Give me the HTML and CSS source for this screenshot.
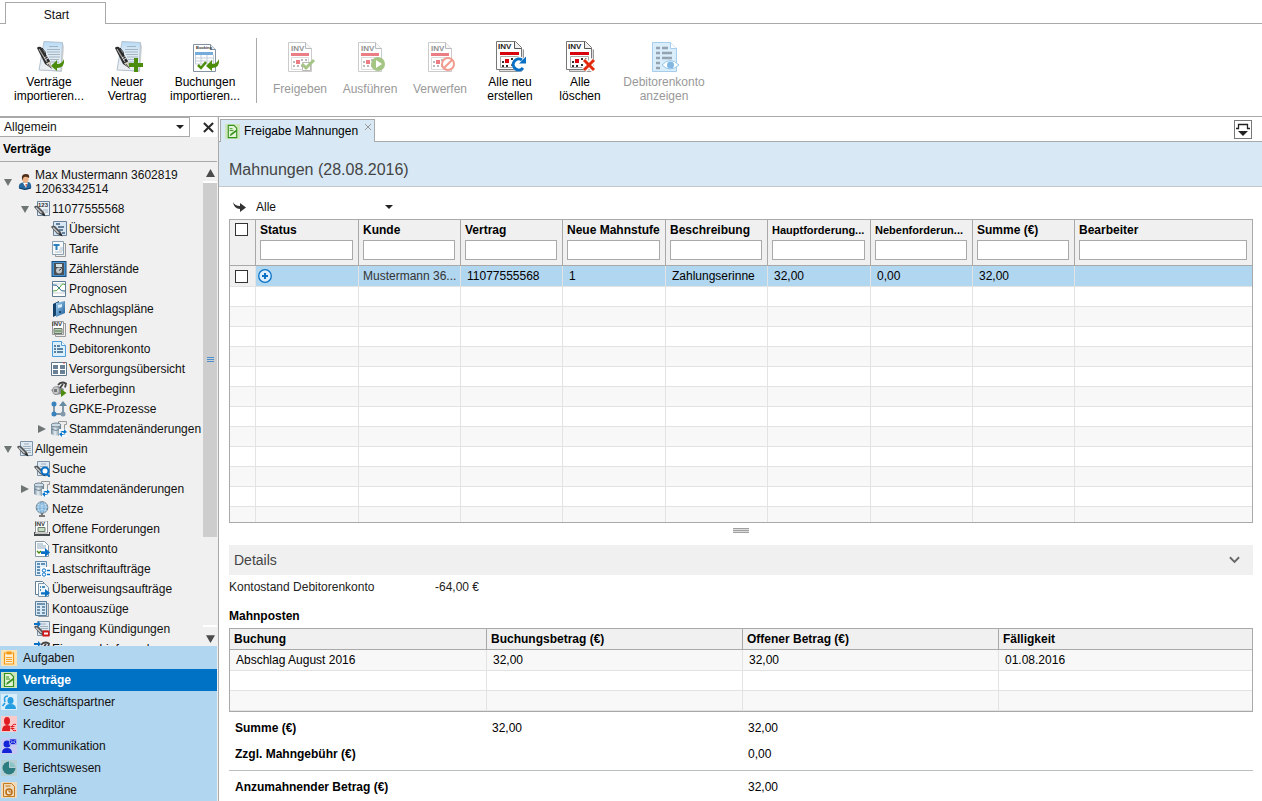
FILE: index.html
```html
<!DOCTYPE html>
<html lang="de">
<head>
<meta charset="utf-8">
<title>Freigabe Mahnungen</title>
<link rel="stylesheet" href="styles.css">
</head>
<body>
<svg class="sprite" aria-hidden="true">
  <defs>
    <linearGradient id="paper" x1="0" y1="0" x2="0" y2="1"><stop offset="0" stop-color="#b5daf6"/><stop offset=".35" stop-color="#dde9f3"/><stop offset="1" stop-color="#eef0f2"/></linearGradient>
    <linearGradient id="steel" x1="0" y1="0" x2="1" y2="0"><stop offset="0" stop-color="#6f8798"/><stop offset=".4" stop-color="#e6eef4"/><stop offset="1" stop-color="#5f7788"/></linearGradient>
    <linearGradient id="blue" x1="0" y1="0" x2="1" y2="1"><stop offset="0" stop-color="#a4d2f3"/><stop offset="1" stop-color="#1b5c96"/></linearGradient>
  </defs>
  <symbol id="contract" viewBox="0 0 32 32">
    <path d="M7 30 29 32 31 7 30 3z" fill="#d5d5d5"/>
    <path d="M11 1.500 29.500 2.500 28 31 6 30z" fill="url(#paper)" stroke="#b3c3d0"/>
    <path d="M16 6.500h9M14 9.500h13M14 12h13M15 14.500h12M16 17h11M17 19.500h9M18 22h8M19 24.500h6" stroke="#93a7b8" stroke-width=".8"/>
    <path d="M4 8Q5 6 8 7L17 21 18 28 12 24z" fill="#2b2b2d"/>
    <path d="M6 9 14 22" stroke="#a8a8a8" stroke-width="1.200"/>
    <path d="M11 18l3-2M12 20l3-2" stroke="#e4e4e4"/>
    <path d="M13 23.500 18.500 28.500 17 21.500z" fill="#d8d2c2"/><path d="M15 24 18.500 28.500" stroke="#333" stroke-width=".8"/>
    <path d="M9 8Q13 11 13 17" stroke="#222" fill="none"/>
  </symbol>
  <symbol id="garrow" viewBox="0 0 14 12"><path d="M0 7 6 1V5Q11 5 13 0 14 9 6 9V12z" fill="#4c8c0b"/></symbol>
  <symbol id="invpage" viewBox="0 0 32 32">
    <path d="M4.500 2.500h17l6 6v23h-23z" fill="#fff" stroke="#999"/>
    <path d="M21.500 2.500v6h6" fill="#eee" stroke="#777"/>
    <text x="7" y="11" class="inv">INV</text>
    <path d="M7 13h18v3H7z" fill="#d9000d"/>
    <path d="M7.500 17.500h17v12h-17z" fill="#fff" stroke="#bbb"/>
    <path d="M12 20h4v4h-4z" fill="#d9000d"/>
    <path d="M9 22h2M17 20h2M21 20h2M9 26h2M13 26h2M17 26h2M21 24h2" stroke="#777" stroke-width="2"/>
  </symbol>
  <symbol id="invstack" viewBox="0 0 32 32">
    <path d="M3.500 3.500v26h2v2h22l2-2v-20" fill="#ddd" stroke="#999"/>
    <path d="M2.500 1.500h19l6 6v22h-25z" fill="#fff" stroke="#777"/>
    <path d="M20.500 1.500v7h7" fill="#eee" stroke="#555"/>
    <text x="4" y="9" class="inv">INV</text>
    <path d="M6 12h19v3H6z" fill="#d9000d"/>
    <path d="M6.500 16.500h18v11h-18z" fill="#fff" stroke="#aaa"/>
    <path d="M11 19h4v4h-4z" fill="#d9000d"/>
    <path d="M8 22h2M17 19h2M21 19h2M8 26h2M12 26h2M17 25h2" stroke="#333" stroke-width="2"/>
  </symbol>
  <symbol id="pen" viewBox="0 0 16 16">
    <path d="M0 6Q1 4 4 5L10 11 11 15 6 13z" fill="#55595c"/><path d="M2 6.500 7.500 12" stroke="#c8cacb" stroke-width="1.200"/><path d="M8 13.500 10 12 11.500 15.500z" fill="#222"/>
  </symbol>
  <symbol id="s-contract" viewBox="0 0 16 16">
    <path d="M3.500.5h12v14h-12z" fill="#dfe9f1" stroke="#7c93a8"/>
    <path d="M7 3h5M6 5.500h8M7 7.500h7M9 9.500h5M11 11.500h3" stroke="#8d9fb0" stroke-width=".8"/>
    <use href="#pen" width="16" height="16"/>
  </symbol>
  <symbol id="s-person" viewBox="0 0 16 16">
    <path d="M2 14Q1 9 6 8.500L12 8Q15 10 14 14 8 17 2 14z" fill="#24689f"/><path d="M6 9 9 14 11 8.500z" fill="#fff"/><path d="M8.500 10 9 14 10 10z" fill="#c0392b"/><path d="M2 14Q8 17 14 14" stroke="#0b3868" fill="none"/>
    <ellipse cx="8.500" cy="5" rx="3" ry="4" fill="#ecb488"/><path d="M5 5Q4 0 9 0q4 0 3 4-3-2-5-1-1 1-2 4z" fill="#51301b"/>
  </symbol>
  <symbol id="s-number" viewBox="0 0 16 16">
    <path d="M3.500.5h12v14h-12z" fill="#e8eff5" stroke="#6a8299"/><text x="4" y="6" class="tiny">123</text>
    <path d="M9 9h5M11 11h3" stroke="#a3b3c0"/>
    <use href="#pen" width="16" height="16"/>
  </symbol>
  <symbol id="s-overview" viewBox="0 0 16 16">
    <path d="M2.500.5h13v14h-13z" fill="#d7e6f2" stroke="#6a8299"/><path d="M5 3h4M7 6h6M8 9h4M11 12h3" stroke="#66809a" stroke-width="1.800"/>
    <use href="#pen" width="16" height="16"/>
  </symbol>
  <symbol id="s-tariff" viewBox="0 0 16 16">
    <path d="M4.500 2.500h10v13h-10z" fill="#eee" stroke="#999"/><path d="M1.500.5h11v13h-11z" fill="#f7fafc" stroke="#8ba0b0"/>
    <path d="M2.500 4h6M5.500 4v5" stroke="#2c80bd" stroke-width="2"/><path d="M9 7h3M8 9h4M4 11h7" stroke="#b0bcc6"/>
  </symbol>
  <symbol id="s-meter" viewBox="0 0 16 16">
    <rect x="1" y=".5" width="14" height="15" fill="#4c93d0" stroke="#174c7c"/><path d="M3 2h10v12H3z" fill="#4a4f54"/><path d="M5 3h6v3H5z" fill="#d7e1e8"/><circle cx="8" cy="9.500" r="3" fill="#c3c8cc"/><path d="M8 9.500 10 8" stroke="#333"/>
  </symbol>
  <symbol id="s-forecast" viewBox="0 0 16 16">
    <path d="M1.500.5h13v15h-13z" fill="#fff" stroke="#5d7d95"/><path d="M2 12h12M2 3h12" stroke="#c2cdd5"/><path d="M2 4Q6 3 8 7t6 3" stroke="#23608d" fill="none"/><path d="M2 10Q6 11 9 6t5-2" stroke="#50a73c" fill="none"/>
  </symbol>
  <symbol id="s-folder" viewBox="0 0 16 16">
    <path d="M2 3 8 0v13l-6 3z" fill="#15426a"/><path d="M5 2 14 0v12l-9 4z" fill="url(#blue)"/><path d="M7 4 11 3v3L7 7z" fill="#d7eafa"/><circle cx="9" cy="11" r="1" fill="#09355e"/>
  </symbol>
  <symbol id="s-invoice" viewBox="0 0 16 16">
    <path d="M4.500 2.500h10v13h-10z" fill="#eee" stroke="#999"/><path d="M1.500.5h11v13h-11z" fill="#fff" stroke="#999"/><text x="1" y="5" class="tiny">INV</text>
    <path d="M3 7.500h8v5H3z" fill="#b9d1b4" stroke="#68756a"/><path d="M4 10h6" stroke="#557052"/>
  </symbol>
  <symbol id="s-account" viewBox="0 0 16 16">
    <path d="M1.500.5h9l4 4v11h-13z" fill="#dceffc" stroke="#4c9edb"/><path d="M10.500.5v4h4" fill="#fff" stroke="#4c9edb"/><path d="M3 5h2M3 8h2M3 11h2M6 5h3M6 8h6M6 11h6" stroke="#315e83" stroke-width="1.500"/>
  </symbol>
  <symbol id="s-grid" viewBox="0 0 16 16">
    <path d="M.5 1.500h15v13H.5z" fill="#fff" stroke="#60788c"/><path d="M2 4h5v4H2zM9 4h5v4H9zM2 9h5v4H2zM9 9h5v4H9z" fill="#6b8296"/><path d="M12 2h2" stroke="#d44"/>
  </symbol>
  <symbol id="s-plug" viewBox="0 0 16 16">
    <path d="M0 9 7 5l6 3-2 5-7 1z" fill="#85898b"/><ellipse cx="5" cy="9.500" rx="3.500" ry="4" fill="#c5c8ca" stroke="#777" stroke-width=".6"/><path d="M7 4Q10 0 15 2.500l-1 4M9 7l3-4" stroke="#444" stroke-width="1.800" fill="none"/><path d="M10 8 15.500 12 10 16z" fill="#4c8c0b"/><path d="M3 8h3v3H3z" fill="#777"/>
  </symbol>
  <symbol id="s-process" viewBox="0 0 16 16">
    <path d="M3 3v10h9V4" stroke="#829aac" stroke-width="2" fill="none"/><path d="M8 5 12 0 16 5z" fill="#688aa3"/><circle cx="3" cy="3" r="2.500" fill="#3882bd"/><circle cx="3" cy="13" r="2.500" fill="#3882bd"/><circle cx="12" cy="13" r="2.500" fill="#829aac"/>
  </symbol>
  <symbol id="s-data" viewBox="0 0 16 16">
    <path d="M7.500.5h8v3h-2v11h-6z" fill="#eee" stroke="#999"/><path d="M0 4v9q5 3 10 0V4z" fill="url(#steel)"/><ellipse cx="5" cy="4" rx="5" ry="2" fill="#cddbe5" stroke="#708594"/><path d="M0 8q5 3 10 0" stroke="#708594" fill="none"/>
    <path d="M8 8h8v8H8z" fill="#f4f8fb"/><path d="M9 10h4V8l3 3-3 2v-1M15 14h-4v2l-3-3 3-2v2" fill="#0b77cb"/>
  </symbol>
  <symbol id="s-search" viewBox="0 0 16 16">
    <use href="#s-contract" width="16" height="16"/><circle cx="11" cy="10" r="3.500" fill="#fff" stroke="#0871c5" stroke-width="2"/><path d="M13 13 16 16" stroke="#0871c5" stroke-width="2"/>
  </symbol>
  <symbol id="s-globe" viewBox="0 0 16 16">
    <path d="M8 12v3M5 15h6" stroke="#777" stroke-width="2"/><circle cx="8" cy="6.500" r="5.800" fill="#7cb1da" stroke="#667987"/><path d="M2 6h12M8 1v11M3 3q5 3 10 0M3 10q5-3 10 0M6 1Q2 6 6 12M10 1q4 5 0 11" stroke="#e5f2fb" stroke-width=".5" fill="none"/>
  </symbol>
  <symbol id="s-open" viewBox="0 0 16 16">
    <path d="M1.500 0v12h12V0z" fill="#fff" stroke="#999"/><text x="1" y="5" class="tiny">INV</text><path d="M4 6.500h7v4H4z" fill="#c7dec2" stroke="#6c7a6d"/><path d="M0 11h1v2h14v-2h1v4H0z" fill="#464b4e"/>
  </symbol>
  <symbol id="s-transit" viewBox="0 0 16 16">
    <path d="M1.500.5h9l4 4v11h-13z" fill="#fff" stroke="#8598a7"/><path d="M3 3h6M3 5h9M3 7h9" stroke="#8da9be"/><path d="M3 10 5 12 7 10" stroke="#4c8c0b" stroke-width="1.500" fill="none"/><path d="M7 10.300h4V7l5 4.500-5 4.500v-3H7z" fill="#0871c5"/>
  </symbol>
  <symbol id="s-debit" viewBox="0 0 16 16">
    <path d="M1.500.5h11v14h-11z" fill="#e4f0f9" stroke="#5d8bb0"/><path d="M3 3h3M7 3h4M3 6h3M3 9h3M3 12h3" stroke="#35709f" stroke-width="1.500"/><path d="M7 6h9v10H7z" fill="#fff"/><circle cx="10" cy="9.500" r="1.700" fill="none" stroke="#0871c5"/><circle cx="10" cy="13.500" r="1.700" fill="none" stroke="#0871c5"/><path d="M13 9.500h3M13 13.500h3" stroke="#0871c5" stroke-width="1.500"/>
  </symbol>
  <symbol id="s-transfer" viewBox="0 0 16 16">
    <path d="M1.500.5h7l2 2v11h-9z" fill="#fff" stroke="#5f7d95"/><path d="M4.500 2.500h6l4 4v9h-10z" fill="#eff6fb" stroke="#7c96ab"/><path d="M6 6h1M6 9h1M8 6h3" stroke="#16699f" stroke-width="1.500"/><path d="M7 11.300h4V8l5 4-5 4v-2.500H7z" fill="#0871c5"/>
  </symbol>
  <symbol id="s-statement" viewBox="0 0 16 16">
    <path d="M4.500 2.500h10v13h-10z" fill="#ddd" stroke="#8999a5"/><path d="M1.500.5h11v14h-11z" fill="#d8eaf7" stroke="#5c7d98"/><path d="M3 3h8M3 6h3M8 6h3M3 9h3M8 9h3M3 12h3M8 12h3" stroke="#527794" stroke-width="1.500"/>
  </symbol>
  <symbol id="s-cancel" viewBox="0 0 16 16">
    <use href="#s-contract" width="16" height="16"/><path d="M0 2h4V0l3 3-3 3V4H0z" fill="#0871c5"/><path d="M8.500 9.500h7v6h-7z" fill="#d41818"/><path d="M10 12.500h4" stroke="#fff" stroke-width="2"/>
  </symbol>
  <symbol id="s-supply" viewBox="0 0 16 16">
    <use href="#s-plug" width="16" height="16"/><path d="M0 2h4V0l3 3-3 3V4H0z" fill="#0871c5"/>
  </symbol>
  <symbol id="n-tasks" viewBox="0 0 16 16">
    <path d="M0 0h16v16H0z" fill="#fbe3b3"/><path d="M3.500 3h9v11h-9z" fill="#fdf0d6" stroke="#f39a12" stroke-width="1.200"/><path d="M5.500 1.500h5v3h-5z" fill="#f39a12"/><path d="M5 7.500h6M5 9.500h6M5 11.500h6" stroke="#f39a12" stroke-width=".9"/>
  </symbol>
  <symbol id="n-contract" viewBox="0 0 16 16">
    <path d="M0 0h16v16H0z" fill="#cde6bd"/><path d="M3.500 1.500h6l3 3v10h-9z" fill="#e4f4d8" stroke="#36921d" stroke-width="1.200"/><path d="M5 5h3M5 7h4" stroke="#36921d"/><path d="M5 13 6 10.500 12 6 13 7.500 7 12z" fill="#36921d"/>
  </symbol>
  <symbol id="n-partner" viewBox="0 0 16 16">
    <path d="M0 0h16v16H0z" fill="#d9eefb"/><path d="M4 8Q2 2 7 2M1.500 12l2.500-3" fill="none" stroke="#249de1" stroke-width="1.600"/><ellipse cx="9.500" cy="6.500" rx="3" ry="3.500" fill="#249de1"/><path d="M4 15q0-5 5.500-5t5.500 5z" fill="#249de1"/>
  </symbol>
  <symbol id="n-creditor" viewBox="0 0 16 16">
    <path d="M0 0h16v16H0z" fill="#f8caca"/><ellipse cx="6" cy="5" rx="3" ry="4" fill="#e01c23"/><path d="M1 15q0-6 5-6t5 6z" fill="#e01c23"/><path d="M9 7h7v9H9z" fill="#f8caca"/><path d="M15 8.500q-4-1-4 3t4 3M9.500 10.500h4M9.500 12.500h4" stroke="#e01c23" fill="none"/>
  </symbol>
  <symbol id="n-comm" viewBox="0 0 16 16">
    <path d="M0 0h16v16H0z" fill="#c7cbf4"/><circle cx="6" cy="6" r="3.500" fill="#1425d8"/><path d="M1 15q0-5 5-5t5 5z" fill="#1425d8"/><path d="M8.500 1h7v5.500h-7z" fill="#1425d8" stroke="#c7cbf4" stroke-width=".6"/><path d="M9 1.500 12 4.500 15 1.500M9 6 11 4M15 6 13 4" stroke="#c7cbf4" stroke-width=".8" fill="none"/>
  </symbol>
  <symbol id="n-report" viewBox="0 0 16 16">
    <path d="M0 0h16v16H0z" fill="#b5d0d4"/><circle cx="8" cy="8" r="6.500" fill="#2d7d80"/><path d="M8.500 7.500V1.500A6 6 0 0 1 14.500 7.500z" fill="#8cc3c6" stroke="#b5d0d4"/>
  </symbol>
  <symbol id="n-plan" viewBox="0 0 16 16">
    <path d="M0 0h16v16H0z" fill="#f0d9b9"/><path d="M2.500 1.500h8l3 3v10h-11z" fill="none" stroke="#c37a1d"/><path d="M4.500 4h5" stroke="#c37a1d"/><circle cx="8" cy="10" r="3" fill="#f5e6d0" stroke="#b76c12" stroke-width="1.500"/><path d="M8 8v2h2" fill="none" stroke="#b76c12"/>
  </symbol>
  <symbol id="open" viewBox="0 0 8 8"><path d="M0 1h8L4 8z" fill="#6f7474"/></symbol>
  <symbol id="closed" viewBox="0 0 8 8"><path d="M0 0v8l8-4z" fill="#6f7474"/></symbol>
  <symbol id="caret" viewBox="0 0 8 4"><path d="M0 0h8L4 4z" fill="#222"/></symbol>
</svg>

<header class="ribbon-tabs"><button class="ribbon-tab">Start</button></header>
<nav class="toolbar" aria-label="Aktionen">
  <button class="tool"><svg viewBox="0 0 32 32"><use href="#contract"/><use href="#garrow" x="18" y="19" width="14" height="12"/></svg><span>Verträge<br>importieren...</span></button>
  <button class="tool"><svg viewBox="0 0 32 32"><use href="#contract"/><path d="M23 18h4v5h5v4h-5v5h-4v-5h-5v-4h5z" fill="#4c8c0b"/></svg><span>Neuer<br>Vertrag</span></button>
  <button class="tool"><svg viewBox="0 0 32 32"><path d="M4.500 4.500h17l5 5v22h-22z" fill="#fff" stroke="#8392a0"/><path d="M21.500 4.500v5h5" fill="#eee" stroke="#8392a0"/><text x="7" y="9" class="micro">Booking</text><path d="M6 12h18v3H6z" fill="#75acdc"/><path d="M6.500 15v9h18v-9M12 15v9M18 15v9M7 18h17M7 21h17" stroke="#c2ced8" fill="none"/><path d="M9 25 12 28 17 22" stroke="#4c8c0b" stroke-width="2.500" fill="none"/><use href="#garrow" x="17" y="19" width="14" height="12"/></svg><span>Buchungen<br>importieren...</span></button>
  <span class="separator"></span>
  <button class="tool narrow" disabled><svg viewBox="0 0 32 32"><use href="#invpage"/><path d="M18.500 22.500h8v8h-8z" fill="#fff" stroke="#777"/><path d="M18 24 22 28 30 20" stroke="#4c8c0b" stroke-width="3" fill="none"/></svg><span>Freigeben</span></button>
  <button class="tool narrow" disabled><svg viewBox="0 0 32 32"><use href="#invpage"/><circle cx="24" cy="24" r="7" fill="#4c8c0b"/><path d="M22 20 28 24 22 28z" fill="#fff"/></svg><span>Ausführen</span></button>
  <button class="tool narrow" disabled><svg viewBox="0 0 32 32"><use href="#invpage"/><circle cx="24" cy="24" r="6" fill="#fff" stroke="#e63a20" stroke-width="2"/><path d="M20 28 28 20" stroke="#e63a20" stroke-width="2"/></svg><span>Verwerfen</span></button>
  <button class="tool narrow"><svg viewBox="0 0 32 32"><use href="#invstack"/><circle cx="25" cy="24" r="7.500" fill="#fff"/><path d="M29 28A5.500 5.500 0 1 1 28 20" fill="none" stroke="#0871c5" stroke-width="3"/><path d="M25 23.500h7v-7z" fill="#0871c5"/></svg><span>Alle neu<br>erstellen</span></button>
  <button class="tool narrow"><svg viewBox="0 0 32 32"><use href="#invstack"/><path d="M20 20 30 30M30 20 20 30" stroke="#fff" stroke-width="6"/><path d="M20 20 30 30M30 20 20 30" stroke="#e22b0c" stroke-width="3"/></svg><span>Alle<br>löschen</span></button>
  <button class="tool wide" disabled><svg viewBox="0 0 32 32"><path d="M4.500 2.500h18l6 6v23h-24z" fill="#b4dcf8" stroke="#4f9ddb"/><path d="M22.500 2.500v6h6" fill="#fff" stroke="#4f9ddb"/><path d="M8 8h4M8 13h4M8 18h4M8 23h4M8 28h4M14 8h6M14 13h10M14 18h10" stroke="#2b4a62" stroke-width="2.500"/><path d="M14 25Q22 16 31 25 22 33 14 25z" fill="#fff" stroke="#2a8fd6"/><circle cx="22.500" cy="25" r="3.500" fill="#0871c5"/></svg><span>Debitorenkonto<br>anzeigen</span></button>
</nav>

<div class="workspace">
  <aside class="sidebar">
    <div class="side-top">
      <label class="combo"><select aria-label="Bereich"><option>Allgemein</option></select><svg class="caret"><use href="#caret"/></svg></label>
      <button class="close" aria-label="Schließen"><svg viewBox="0 0 12 12"><path d="M1 1 11 11M11 1 1 11" stroke="#2a2a2a" stroke-width="2.200"/></svg></button>
    </div>
    <h2 class="side-title">Verträge</h2>
    <div class="tree-area">
      <div class="tree">
        <div class="node customer"><button class="toggle" aria-label="Zuklappen"><svg><use href="#open"/></svg></button><a href="#"><svg><use href="#s-person"/></svg><span>Max Mustermann 3602819<br>12063342514</span></a></div>
        <div class="node l2"><button class="toggle" aria-label="Zuklappen"><svg><use href="#open"/></svg></button><a href="#"><svg><use href="#s-number"/></svg>11077555568</a></div>
        <div class="node l3"><a href="#"><svg><use href="#s-overview"/></svg>Übersicht</a></div>
        <div class="node l3"><a href="#"><svg><use href="#s-tariff"/></svg>Tarife</a></div>
        <div class="node l3"><a href="#"><svg><use href="#s-meter"/></svg>Zählerstände</a></div>
        <div class="node l3"><a href="#"><svg><use href="#s-forecast"/></svg>Prognosen</a></div>
        <div class="node l3"><a href="#"><svg><use href="#s-folder"/></svg>Abschlagspläne</a></div>
        <div class="node l3"><a href="#"><svg><use href="#s-invoice"/></svg>Rechnungen</a></div>
        <div class="node l3"><a href="#"><svg><use href="#s-account"/></svg>Debitorenkonto</a></div>
        <div class="node l3"><a href="#"><svg><use href="#s-grid"/></svg>Versorgungsübersicht</a></div>
        <div class="node l3"><a href="#"><svg><use href="#s-plug"/></svg>Lieferbeginn</a></div>
        <div class="node l3"><a href="#"><svg><use href="#s-process"/></svg>GPKE-Prozesse</a></div>
        <div class="node l3"><button class="toggle" aria-label="Aufklappen"><svg><use href="#closed"/></svg></button><a href="#"><svg><use href="#s-data"/></svg>Stammdatenänderungen</a></div>
        <div class="node"><button class="toggle" aria-label="Zuklappen"><svg><use href="#open"/></svg></button><a href="#"><svg><use href="#s-contract"/></svg>Allgemein</a></div>
        <div class="node l2"><a href="#"><svg><use href="#s-search"/></svg>Suche</a></div>
        <div class="node l2"><button class="toggle" aria-label="Aufklappen"><svg><use href="#closed"/></svg></button><a href="#"><svg><use href="#s-data"/></svg>Stammdatenänderungen</a></div>
        <div class="node l2"><a href="#"><svg><use href="#s-globe"/></svg>Netze</a></div>
        <div class="node l2"><a href="#"><svg><use href="#s-open"/></svg>Offene Forderungen</a></div>
        <div class="node l2"><a href="#"><svg><use href="#s-transit"/></svg>Transitkonto</a></div>
        <div class="node l2"><a href="#"><svg><use href="#s-debit"/></svg>Lastschriftaufträge</a></div>
        <div class="node l2"><a href="#"><svg><use href="#s-transfer"/></svg>Überweisungsaufträge</a></div>
        <div class="node l2"><a href="#"><svg><use href="#s-statement"/></svg>Kontoauszüge</a></div>
        <div class="node l2"><a href="#"><svg><use href="#s-cancel"/></svg>Eingang Kündigungen</a></div>
        <div class="node l2"><a href="#"><svg><use href="#s-supply"/></svg>Eingang Lieferenden</a></div>
      </div>
      <div class="scrollbar">
        <button aria-label="Nach oben"><svg viewBox="0 0 8 8"><path d="M0 7h8L4 0z" fill="#4b4b4b"/></svg></button>
        <div class="track"><div class="thumb"><span class="grip"></span></div></div>
        <button aria-label="Nach unten"><svg viewBox="0 0 8 8"><path d="M0 1h8L4 8z" fill="#4b4b4b"/></svg></button>
      </div>
    </div>
    <nav class="areas" aria-label="Bereiche">
      <a href="#"><svg><use href="#n-tasks"/></svg>Aufgaben</a>
      <a href="#" class="current"><svg><use href="#n-contract"/></svg>Verträge</a>
      <a href="#"><svg><use href="#n-partner"/></svg>Geschäftspartner</a>
      <a href="#"><svg><use href="#n-creditor"/></svg>Kreditor</a>
      <a href="#"><svg><use href="#n-comm"/></svg>Kommunikation</a>
      <a href="#"><svg><use href="#n-report"/></svg>Berichtswesen</a>
      <a href="#"><svg><use href="#n-plan"/></svg>Fahrpläne</a>
    </nav>
  </aside>

  <main class="content">
    <div class="doc-tabs">
      <div class="doc-tab"><svg><use href="#n-contract"/></svg><span>Freigabe Mahnungen</span><button class="tab-close" aria-label="Tab schließen"><svg viewBox="0 0 6 6"><path d="M0 0 6 6M6 0 0 6" stroke="#999"/></svg></button></div>
      <button class="tab-list" aria-label="Tabliste"><svg viewBox="0 0 16 16"><path d="M1 6.500h2.500v-4h9v4H15" fill="none" stroke="#222" stroke-width="1.300"/><path d="M3 9h10l-5 5z" fill="#222"/></svg></button>
    </div>
    <h1 class="page-title">Mahnungen (28.08.2016)</h1>
    <div class="body">
      <div class="filter">
        <button class="apply" aria-label="Anwenden"><svg viewBox="0 0 13 10"><path d="M0 0Q2 4 7 4V1l6 4.500L7 10V7Q1 7 0 0z" fill="#333"/></svg></button>
        <label class="filter-select"><select aria-label="Filter"><option>Alle</option></select><svg class="caret"><use href="#caret"/></svg></label>
      </div>
      <div class="grid-frame">
        <table class="grid">
          <colgroup><col class="c-check"><col class="c-wide"><col class="c-data"><col class="c-data"><col class="c-wide"><col class="c-data"><col class="c-wide"><col class="c-data"><col class="c-data"><col></colgroup>
          <thead><tr>
            <th><input type="checkbox" aria-label="Alle auswählen"></th>
            <th><label>Status<input type="text"></label></th>
            <th><label>Kunde<input type="text"></label></th>
            <th><label>Vertrag<input type="text"></label></th>
            <th><label>Neue Mahnstufe<input type="text"></label></th>
            <th><label>Beschreibung<input type="text"></label></th>
            <th><label class="long">Hauptforderung...<input type="text"></label></th>
            <th><label class="long">Nebenforderun...<input type="text"></label></th>
            <th><label>Summe (€)<input type="text"></label></th>
            <th><label>Bearbeiter<input type="text"></label></th>
          </tr></thead>
          <tbody>
            <tr class="selected"><td><input type="checkbox" aria-label="Zeile auswählen"></td><td class="status"><svg viewBox="0 0 14 14"><circle cx="7" cy="7" r="6.300" fill="#dceefb" stroke="#0871c5" stroke-width="1.300"/><path d="M7 4v6M4 7h6" stroke="#0871c5" stroke-width="2"/></svg></td><td class="customer-cell">Mustermann 36...</td><td>11077555568</td><td>1</td><td>Zahlungserinne</td><td>32,00</td><td>0,00</td><td>32,00</td><td></td></tr>
            <tr><td></td><td></td><td></td><td></td><td></td><td></td><td></td><td></td><td></td><td></td></tr>
            <tr><td></td><td></td><td></td><td></td><td></td><td></td><td></td><td></td><td></td><td></td></tr>
            <tr><td></td><td></td><td></td><td></td><td></td><td></td><td></td><td></td><td></td><td></td></tr>
            <tr><td></td><td></td><td></td><td></td><td></td><td></td><td></td><td></td><td></td><td></td></tr>
            <tr><td></td><td></td><td></td><td></td><td></td><td></td><td></td><td></td><td></td><td></td></tr>
            <tr><td></td><td></td><td></td><td></td><td></td><td></td><td></td><td></td><td></td><td></td></tr>
            <tr><td></td><td></td><td></td><td></td><td></td><td></td><td></td><td></td><td></td><td></td></tr>
            <tr><td></td><td></td><td></td><td></td><td></td><td></td><td></td><td></td><td></td><td></td></tr>
            <tr><td></td><td></td><td></td><td></td><td></td><td></td><td></td><td></td><td></td><td></td></tr>
            <tr><td></td><td></td><td></td><td></td><td></td><td></td><td></td><td></td><td></td><td></td></tr>
            <tr><td></td><td></td><td></td><td></td><td></td><td></td><td></td><td></td><td></td><td></td></tr>
            <tr><td></td><td></td><td></td><td></td><td></td><td></td><td></td><td></td><td></td><td></td></tr>
          </tbody>
        </table>
      </div>
      <div class="splitter"><span></span></div>
      <section class="details">
        <h2 class="details-head">Details<button aria-label="Zuklappen"><svg viewBox="0 0 12 8"><path d="M1 1 6 6 11 1" fill="none" stroke="#666" stroke-width="2"/></svg></button></h2>
        <dl class="balance"><dt>Kontostand Debitorenkonto</dt><dd>-64,00 €</dd></dl>
        <h3 class="items-title">Mahnposten</h3>
        <div class="items-frame">
          <table class="items">
            <colgroup><col class="c-first"><col class="c-item"><col class="c-item"><col></colgroup>
            <thead><tr><th>Buchung</th><th>Buchungsbetrag (€)</th><th>Offener Betrag (€)</th><th>Fälligkeit</th></tr></thead>
            <tbody>
              <tr><td>Abschlag August 2016</td><td>32,00</td><td>32,00</td><td>01.08.2016</td></tr>
              <tr><td></td><td></td><td></td><td></td></tr>
              <tr><td></td><td></td><td></td><td></td></tr>
            </tbody>
          </table>
        </div>
        <table class="totals">
          <colgroup><col class="c-first"><col class="c-item"><col></colgroup>
          <tbody>
            <tr><th>Summe (€)</th><td>32,00</td><td>32,00</td></tr>
            <tr class="fee"><th>Zzgl. Mahngebühr (€)</th><td></td><td>0,00</td></tr>
            <tr class="due"><th>Anzumahnender Betrag (€)</th><td></td><td>32,00</td></tr>
          </tbody>
        </table>
      </section>
    </div>
  </main>
</div>
</body>
</html>
```
FILE: styles.css
```css
* { box-sizing: border-box; }
body { margin: 0; height: 100vh; display: flex; flex-direction: column; overflow: hidden; background: #fff; color: #111; font: 12px/14px "Liberation Sans", Arial, sans-serif; }
button, input, select { font: inherit; color: inherit; }
button { background: none; border: 0; padding: 0; }
a { color: inherit; text-decoration: none; }
h1, h2, h3, dl, dd { margin: 0; font: inherit; }
svg { display: block; flex: none; overflow: visible; }
table { border-collapse: separate; border-spacing: 0; table-layout: fixed; width: 100%; }
th, td { text-align: left; font-weight: normal; }
.sprite { position: absolute; width: 0; height: 0; overflow: hidden; }
.inv { font: bold 8px "Liberation Sans", Arial, sans-serif; fill: #222; }
.tiny { font: bold 6px "Liberation Sans", Arial, sans-serif; fill: #333; }
.micro { font: bold 4px "Liberation Sans", Arial, sans-serif; fill: #333; }
.caret { width: 8px; height: 4px; }

.ribbon-tabs { display: flex; flex: none; height: 24px; padding: 2px 0 0 5px; box-shadow: inset 0 -1px #a9a9a9; }
.ribbon-tab { width: 101px; padding: 2px 0 0 2px; background: #fff; border: 1px solid #a9a9a9; border-bottom: 0; }
.toolbar { display: flex; flex: none; height: 93px; padding: 14px 10px 0; border-bottom: 1px solid #a9a9a9; }
.tool { width: 78px; height: 66px; display: flex; flex-direction: column; align-items: center; gap: 3px; white-space: nowrap; color: #000; }
.tool svg { width: 32px; height: 32px; margin-top: 2px; }
.tool span { height: 28px; display: flex; align-items: center; }
.tool.narrow { width: 70px; }
.tool.wide { width: 98px; }
.tool:disabled { color: #999; }
.tool:disabled svg { opacity: .5; }
.separator { width: 1px; height: 65px; margin: 0 8px 0 12px; background: #a9a9a9; }

.workspace { flex: 1; min-height: 0; display: flex; }
.sidebar { width: 219px; flex: none; display: flex; flex-direction: column; background: #f0f0f0; border-right: 1px solid #a9a9a9; padding-right: 1px; }
.side-top { display: flex; flex: none; height: 20px; background: #fff; }
.combo { width: 190px; display: flex; align-items: center; border: 1px solid #a9a9a9; border-width: 1px 1px 1px 0; padding-right: 5px; }
select { flex: 1; min-width: 0; appearance: none; background: none; border: 0; padding: 0 4px; outline: 0; }
.close { flex: 1; display: grid; place-items: center; padding-left: 9px; }
.close svg { width: 11px; height: 11px; }
.side-title { flex: none; height: 25px; padding: 5px 3px; font-weight: bold; color: #000; border-bottom: 1px solid #a9a9a9; }
.tree-area { flex: 1; min-height: 0; display: flex; }
.tree { flex: 1; min-width: 0; overflow: hidden; }
.node { height: 20px; display: flex; align-items: center; padding-left: 17px; white-space: nowrap; }
.node:has(.toggle) { padding-left: 0; }
.node.customer { height: 37px; padding-top: 3px; }
.node.l2 { padding-left: 34px; }
.node.l2:has(.toggle) { padding-left: 17px; }
.node.l3 { padding-left: 51px; }
.node.l3:has(.toggle) { padding-left: 34px; }
.node a { display: flex; align-items: center; gap: 2px; }
.node a svg { width: 16px; height: 16px; }
.toggle { width: 17px; flex: none; padding-left: 4px; }
.toggle svg { width: 8px; height: 8px; }
.scrollbar { width: 14px; display: flex; flex-direction: column; }
.scrollbar button { height: 19px; padding-top: 3px; display: grid; place-items: center; }
.scrollbar svg { width: 9px; height: 9px; }
.track { flex: 1; border: solid #fff; border-width: 2px 0; }
.thumb { height: 80%; background: #cdcdcd; display: grid; place-items: center; }
.grip { width: 7px; height: 5px; border: solid #4c8fd0; border-width: 1px 0; background: linear-gradient(#cdcdcd 1px, #4c8fd0 1px 2px, #cdcdcd 2px); }
.areas { flex: none; padding-top: 1px; background: #b1d6f0; }
.areas a { height: 22px; display: flex; align-items: center; gap: 6px; padding-left: 1px; }
.areas svg { width: 16px; height: 16px; }
.areas .current { background: #0072c6; color: #fff; font-weight: bold; }

.content { flex: 1; min-width: 0; display: flex; flex-direction: column; }
.doc-tabs { flex: none; height: 25px; display: flex; justify-content: space-between; padding: 2px 10px 0 1px; box-shadow: inset 0 -1px #a9a9a9; }
.doc-tab { display: flex; align-items: center; width: 155px; padding-left: 4px; background: #d8e9f5; border: 1px solid #a9a9a9; border-bottom: 0; white-space: nowrap; color: #000; }
.doc-tab > svg { width: 15px; height: 15px; margin-right: 4px; }
.tab-close { align-self: flex-start; margin: 4px 3px 0 auto; }
.tab-close svg { width: 6px; height: 6px; }
.tab-list { width: 18px; height: 19px; margin-top: 1px; border: 1px solid #777; }
.page-title { flex: none; height: 45px; padding: 18px 10px 0; font-size: 16px; line-height: 20px; color: #444; background: #d8e9f5; border-bottom: 1px solid #c2c8cc; }
.body { flex: 1; min-height: 0; display: flex; flex-direction: column; padding: 0 9px 0 10px; }
.filter { flex: none; height: 32px; display: flex; align-items: center; padding: 8px 4px 0; gap: 6px; }
.apply svg { width: 13px; height: 10px; }
.filter-select { width: 141px; display: flex; align-items: center; }

.grid-frame { flex: 1; min-height: 0; overflow: hidden; border: 1px solid #a9a9a9; }
.c-check { width: 26px; }
.c-data { width: 102px; }
.c-wide { width: 103px; }
th { background: #f0f0f0; border-right: 1px solid #a9a9a9; border-bottom: 1px solid #a9a9a9; font-weight: bold; color: #000; white-space: nowrap; }
td { height: 20px; padding: 0 0 0 6px; border-right: 1px solid #e3e3e3; border-bottom: 1px solid #e3e3e3; white-space: nowrap; color: #000; }
th:last-child, td:last-child { border-right: 0; }
tr > :first-child input { display: block; margin: 0; }
.grid th { height: 46px; padding: 3px 5px 0 4px; vertical-align: top; }
.grid label { display: block; }
.grid .long { font-size: 11px; }
.grid input[type="text"] { display: block; width: 100%; height: 20px; margin: 3px 0 0; border: 1px solid #a9a9a9; background: #fff; }
input[type="checkbox"] { appearance: none; width: 13px; height: 13px; border: 1px solid #333; background: #fff; }
.grid .selected td { background: #b1d6f0; height: 21px; }
.grid .selected td:first-child, .grid th:first-child { padding-left: 5px; background: #f0f0f0; }
.grid tbody tr:nth-child(even) td { background: #fff; }
.grid tbody tr:nth-child(odd):not(.selected) td { background: #f8f8f8; }
.grid .status { padding-left: 2px; }
.status svg { width: 14px; height: 14px; }
.grid .customer-cell { padding-left: 4px; color: #333; }

.splitter { flex: none; height: 22px; padding-top: 5px; display: flex; justify-content: center; }
.splitter span { width: 16px; height: 5px; border: solid #a0a0a0; border-width: 1px 0; background: linear-gradient(#ddd 1px, #a0a0a0 1px 2px, #ddd 2px); }
.details { flex: none; height: 256px; }
.details-head { height: 30px; display: flex; align-items: center; justify-content: space-between; padding: 0 13px 0 5px; font-size: 14px; color: #444; background: #f0f0f0; }
.details-head svg { width: 11px; height: 8px; }
.balance { display: flex; padding-top: 5px; color: #222; }
.balance dt { width: 206px; }
.items-title { padding: 15px 0 5px; font-weight: bold; color: #000; }
.items-frame { border: 1px solid #a9a9a9; }
.c-first { width: 257px; }
.c-item { width: 256px; }
.items th { height: 21px; padding: 0 4px; }
.items tbody tr:nth-child(odd) td { background: #f8f8f8; }
.items tbody tr:first-child td { height: 21px; }
.totals { margin-top: 3px; }
.totals th, .totals td { height: 26px; padding: 0 6px; background: none; border: 0; }
.totals .fee th, .totals .fee td { height: 30px; padding-bottom: 3px; border-bottom: 1px solid #b9c0c0; }
.totals .due th, .totals .due td { height: 32px; }
```
